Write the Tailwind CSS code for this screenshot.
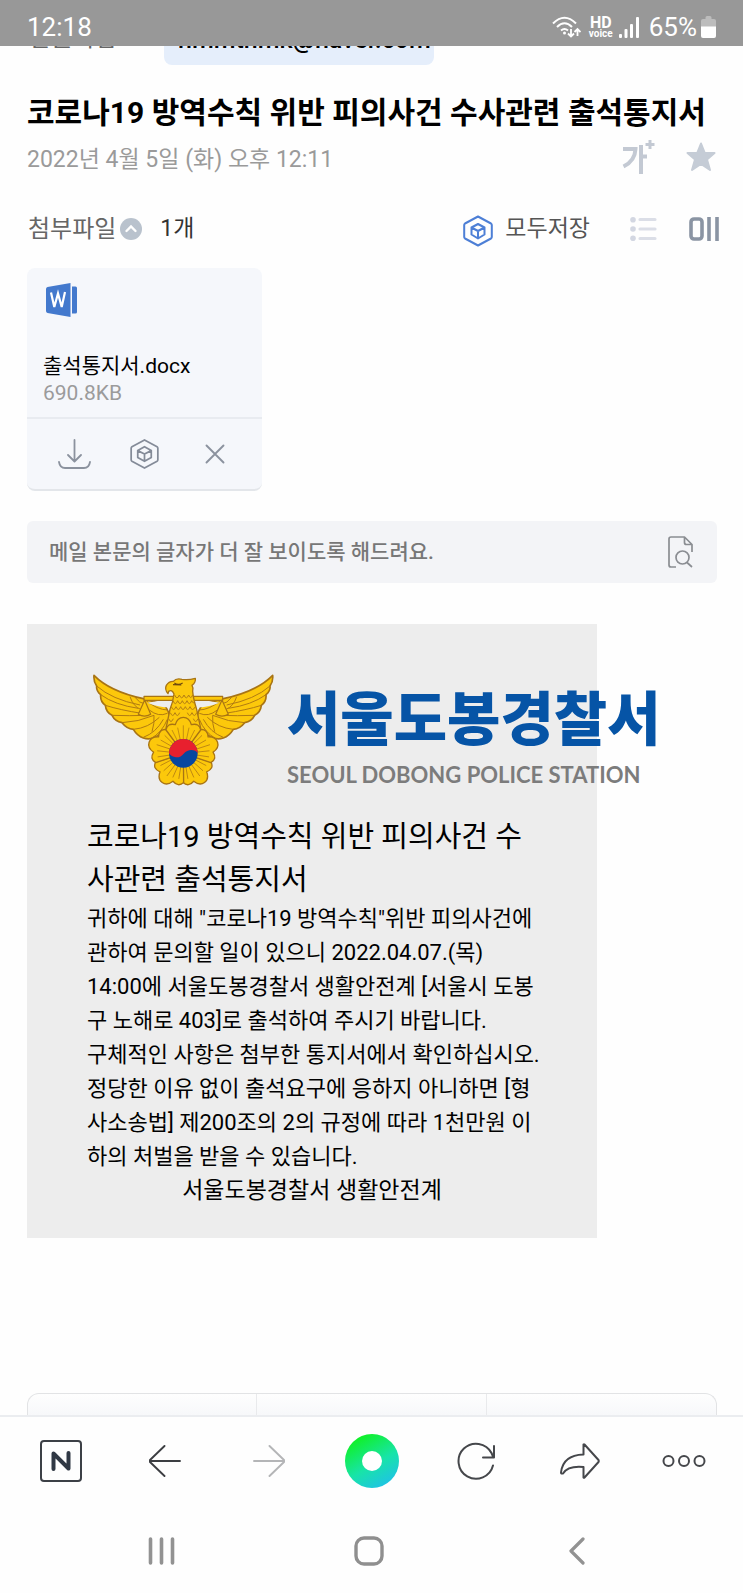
<!DOCTYPE html>
<html lang="ko">
<head>
<meta charset="utf-8">
<meta name="viewport" content="width=device-width, initial-scale=1">
<title>메일</title>
<script src="https://cdn.jsdelivr.net/npm/@tailwindcss/browser@4"></script>
</head>
<body class="flex min-h-screen flex-col bg-[#fefefe] font-[Roboto,'Noto_Sans_CJK_KR',sans-serif] text-black">

<!-- Status bar -->
<header class="flex h-[46px] items-end justify-between bg-[#989898] px-[27px] pb-1 text-white">
  <span class="text-[26px] leading-[30px]">12:18</span>
  <div class="flex items-center">
    <svg class="mr-2 h-[22px] w-[29px]" viewBox="0 0 29 22" fill="none" stroke="#fff" stroke-width="2" aria-hidden="true">
      <path d="M1 7.5Q12.500 -4 24 7.500M5 11Q12.500 3.500 20 11M9 14.500Q12.500 11.500 16 14.500"/>
      <circle cx="12.500" cy="17" r="1.500" fill="#fff" stroke="none"/>
      <path d="M19 13V20M16 17.500L19 20.500L22 17.500M25.500 20V13.500M22.500 16L25.500 13L28.500 16" stroke-width="1.800"/>
    </svg>
    <span class="mr-1.5 flex flex-col items-center font-bold">
      <span class="text-[16px] leading-[13px]">HD</span>
      <span class="text-[10px] leading-[9px]">voice</span>
    </span>
    <svg class="mr-2.5 h-[21px] w-5" viewBox="0 0 20 21" fill="#fff" aria-hidden="true">
      <rect x="0" y="17" width="3" height="4" rx="1"/><rect x="5.500" y="12" width="3" height="9" rx="1"/><rect x="11" y="7" width="3" height="14" rx="1"/><rect x="17" y="0" width="3" height="21" rx="1"/>
    </svg>
    <span class="text-[26px] leading-[30px]">65%</span>
    <svg class="ml-1 h-[22px] w-[15px]" viewBox="0 0 15 22" aria-hidden="true">
      <path d="M2 3H4.500V1.500Q4.500 0 6 0H9Q10.500 0 10.500 1.500V3H13Q15 3 15 5V11H0V5Q0 3 2 3Z" fill="#bcbcbc"/>
      <path d="M0 10.500H15V20Q15 22 13 22H2Q0 22 0 20Z" fill="#fff"/>
    </svg>
  </div>
</header>

<main class="grow">
  <!-- Recipient row, scrolled under the status bar -->
  <div class="flex h-[19px] items-end overflow-hidden px-[27px]">
    <span class="w-[137px] pb-3 pl-0.5 text-[24px] leading-[30px] text-[#666]">받는사람</span>
    <span class="w-[270px] rounded-lg bg-[#e5eefb] px-3.5 pb-2.5 text-center text-[25px] leading-[30px] font-medium">hmmthmk@naver.com</span>
  </div>

  <h1 class="mt-7 px-[27px] text-[30px] leading-[40px] font-bold">코로나19 방역수칙 위반 피의사건 수사관련 출석통지서</h1>

  <div class="mt-[7px] flex items-start justify-between px-[27px]">
    <time datetime="2022-04-05T12:11" class="text-[23px] leading-[40px] text-[#9a9a9a]">2022년 4월 5일 (화) 오후 12:11</time>
    <div class="flex items-center gap-[30px]">
      <button type="button" aria-label="글자 크게">
        <svg class="h-[34px] w-[34px]" viewBox="0 0 34 34" fill="none" stroke="#c3c9d3" stroke-width="4" aria-hidden="true">
          <path d="M1 9H13.500Q13 21 1.500 26.500M19 5V34M19 16.500H25"/><path d="M28 0V9M23.500 4.500H32.500" stroke-width="3"/>
        </svg>
      </button>
      <button type="button" aria-label="중요 표시">
        <svg class="h-[30px] w-[30px]" viewBox="0 0 30 30" fill="#c5ccd6" stroke="#c5ccd6" stroke-width="2" stroke-linejoin="round" aria-hidden="true">
          <path d="M15 1.500L18.800 11H28.500L21 17.500L24 28L15 22L6 28L9 17.500L1.500 11H11.200Z"/>
        </svg>
      </button>
    </div>
  </div>

  <div class="mt-[30px] flex items-center justify-between pr-6 pl-7">
    <div class="flex items-center text-[23px] leading-[38px]">
      <span class="text-[24px] text-[#666]">첨부파일</span>
      <button type="button" class="ml-1 flex h-[22px] w-[22px] items-center justify-center rounded-full bg-[#b9c2cd]" aria-label="첨부파일 접기">
        <svg class="h-[22px] w-[22px]" viewBox="0 0 22 22" fill="none" stroke="#fff" stroke-width="2.400" stroke-linecap="round" aria-hidden="true"><path d="M6.500 13L11 8.500L15.500 13"/></svg>
      </button>
      <span class="ml-[18px] text-[#333]">1개</span>
    </div>
    <div class="flex items-center">
      <button type="button" class="flex items-center gap-3 text-[23px] leading-[38px] text-[#555]">
        <svg class="mt-1 h-8 w-[30px]" viewBox="0 0 30 32" fill="none" stroke="#4d7fd6" stroke-width="2" stroke-linejoin="round" aria-hidden="true">
          <path d="M15 1.500L28 8.500Q28.800 9 28.800 10V22Q28.800 23 28 23.500L15 30.500L2 23.500Q1.200 23 1.200 22V10Q1.200 9 2 8.500Z"/>
          <path d="M15 9L21.500 12.500V19.500L15 23.500L8.500 19.500V12.500ZM8.500 12.500L15 16L21.500 12.500M15 16V23.500"/>
        </svg>
        모두저장
      </button>
      <button type="button" class="ml-10" aria-label="목록형 보기">
        <svg class="h-6 w-[27px]" viewBox="0 0 27 24" fill="none" stroke="#dbdee7" stroke-width="3.200" stroke-linecap="round" aria-hidden="true">
          <path d="M10 2.500H25M10 12H25M10 21.500H25"/><g fill="#d3d7e2" stroke="none"><circle cx="3" cy="2.800" r="2.800"/><circle cx="3" cy="12" r="2.800"/><circle cx="3" cy="21.200" r="2.800"/></g>
        </svg>
      </button>
      <button type="button" class="ml-8" aria-label="카드형 보기">
        <svg class="h-6 w-[30px]" viewBox="0 0 30 24" fill="none" stroke="#8a94a3" stroke-width="3.600" aria-hidden="true">
          <rect x="2" y="2" width="11" height="20" rx="3"/><path d="M20 0V24M28 0V24"/>
        </svg>
      </button>
    </div>
  </div>

  <!-- Attachment card -->
  <div class="mt-5 ml-[27px] w-[235px] rounded-lg border-b-2 border-[#e3e6ea] bg-[#f5f7fb]">
    <div class="px-4 pt-[15px] pb-[11px]">
      <svg class="ml-[3px] h-[34px] w-8" viewBox="0 0 32 34" aria-hidden="true">
        <path d="M1.500 4L24.500 0V34L1.500 30Q0 29.500 0 28V6Q0 4.500 1.500 4Z" fill="#4379cd"/>
        <path d="M26 3.500H29.500Q31 3.500 31 5V29Q31 30.500 29.500 30.500H26Z" fill="#4379cd"/>
        <path d="M5 9.500L8.300 24L12 10.500L15.700 24L19 9" fill="none" stroke="#fff" stroke-width="2.200"/>
      </svg>
      <a href="#" class="mt-[35px] block text-[21px] leading-[28px]">출석통지서.docx</a>
      <p class="text-[21px] leading-[26px] text-[#9b9b9b]">690.8KB</p>
    </div>
    <div class="grid h-[72px] grid-cols-3 items-center justify-items-center border-t-2 border-[#e8ebf0] px-3">
      <button type="button" aria-label="다운로드">
        <svg class="h-[30px] w-[33px]" viewBox="0 0 33 30" fill="none" stroke="#8b929e" stroke-width="1.800" stroke-linecap="round" stroke-linejoin="round" aria-hidden="true"><path d="M16.500 1V22M10 16L16.500 22.500L23 16M1 23Q2 29 7 29H26Q31 29 32 23"/></svg>
      </button>
      <button type="button" aria-label="클라우드에 저장">
        <svg class="h-8 w-[29px]" viewBox="0 0 30 32" fill="none" stroke="#848b98" stroke-width="1.800" stroke-linejoin="round" aria-hidden="true">
          <path d="M15 1.500L28 8.500Q28.800 9 28.800 10V22Q28.800 23 28 23.500L15 30.500L2 23.500Q1.200 23 1.200 22V10Q1.200 9 2 8.500Z"/>
          <path d="M15 8.500L22 12.500V19.500L15 23.500L8 19.500V12.500ZM8 12.500L15 16L22 12.500M15 16V23.500"/>
        </svg>
      </button>
      <button type="button" aria-label="삭제">
        <svg class="h-5 w-5" viewBox="0 0 20 20" fill="none" stroke="#8b929e" stroke-width="1.900" stroke-linecap="round" aria-hidden="true"><path d="M1.500 1.500L18.500 18.500M18.500 1.500L1.500 18.500"/></svg>
      </button>
    </div>
  </div>

  <button type="button" class="mx-[27px] mt-[30px] flex h-[62px] w-[calc(100%-53px)] items-center justify-between rounded-md bg-[#f3f4f7] pr-6 pl-[22px] text-left">
    <span class="text-[21px] leading-[30px] font-medium text-[#777]">메일 본문의 글자가 더 잘 보이도록 해드려요.</span>
    <svg class="h-8 w-[25px]" viewBox="0 0 25 32" fill="none" stroke="#8a8d92" stroke-width="1.700" stroke-linejoin="round" aria-hidden="true">
      <path d="M8 31H3Q1 31 1 29V3Q1 1 3 1H16.500L24 8.500V16M16.500 1V6.500Q16.500 8.500 18.500 8.500H24"/><circle cx="14.500" cy="21.500" r="6.500"/><path d="M19 26.500L24 31"/>
    </svg>
  </button>

  <!-- Mail body -->
  <article class="mt-[41px] ml-[27px] w-[570px] bg-[#ededed] px-[60px] pt-[50px] pb-[30px] whitespace-nowrap">
    <div class="flex items-start pl-1.5">
      <svg class="h-[112px] w-[181px] shrink-0" viewBox="39 42 543 336" stroke-linejoin="round" role="img" aria-label="경찰 상징">
        <defs>
          <g id="wing">
            <path d="M42 46C80 85 130 103 190 116L250 134Q272 150 270 200L238 224Q215 242 190 234Q172 228 160 208Q140 206 126 188Q105 184 96 166Q78 156 76 136Q60 124 62 104Q48 92 50 78Q40 64 42 46Z" fill="#fcc80b" stroke="#a87414" stroke-width="5"/>
            <path d="M50 78Q95 118 180 135M62 104Q105 135 175 145M76 136Q120 150 185 160M96 166Q145 168 205 166M126 188Q175 186 222 166M160 208Q205 204 238 172M190 232Q228 218 250 178M212 236Q246 218 262 178M196 120Q232 150 264 150M208 150Q235 172 262 160M150 110Q160 140 182 148M165 112Q178 130 196 132M222 166Q224 190 216 215" fill="none" stroke="#b17b12" stroke-width="3"/>
          </g>
          <g id="petal">
            <path d="M310 280L258 210Q262 188 286 194Q292 172 310 172Q328 172 334 194Q358 188 362 210Z" fill="#fcc80b" stroke="#a87414" stroke-width="4"/>
            <path d="M310 196V250M293 203L303 250M327 203L317 250M276 210L297 252M344 210L323 252" fill="none" stroke="#b98312" stroke-width="2.500"/>
          </g>
        </defs>
        <use href="#wing"/>
        <use href="#wing" transform="translate(620 0) scale(-1 1)"/>
        <path d="M202 128Q235 120 272 126L270 142Q235 142 202 128ZM418 128Q385 120 348 126L350 142Q385 142 418 128Z" fill="#ededed"/>
        <path d="M192 109H428V121H192Z" fill="#fcc80b" stroke="#a87414" stroke-width="3.500"/>
        <path d="M194 120L175 163Q193 174 212 163ZM426 120L407 163Q426 174 445 163Z" fill="#fcc80b" stroke="#a87414" stroke-width="3.500"/>
        <path d="M282 102Q276 87 266 94L264 101Q253 88 259 76Q267 63 280 64Q288 54 306 58Q325 61 346 55Q348 67 336 76Q341 84 338 94Q340 117 350 148L362 205H258L270 148Q279 126 282 102Z" fill="#fcc80b" stroke="#a87414" stroke-width="4"/>
        <path d="M283 69Q295 77 308 69M279 74L304 75" fill="none" stroke="#6f4a10" stroke-width="3.500"/>
        <path d="M284 105Q291 122 298 105Q305 122 312 105Q319 122 326 105Q332 120 338 105M279 122Q286 140 293 122Q300 140 307 122Q314 140 321 122Q328 140 335 122Q340 134 344 124M274 140Q281 157 288 140Q295 157 302 140Q309 157 316 140Q323 157 330 140Q337 157 346 140M271 158Q278 175 285 158Q292 175 299 158M322 158Q329 175 336 158Q343 175 350 158M266 176Q273 193 280 176M340 176Q347 193 354 176" fill="none" stroke="#b47e14" stroke-width="3"/>
        <use href="#petal" transform="rotate(144 310 280)"/>
        <use href="#petal" transform="rotate(216 310 280)"/>
        <use href="#petal" transform="rotate(72 310 280)"/>
        <use href="#petal" transform="rotate(288 310 280)"/>
        <use href="#petal"/>
        <circle cx="310" cy="280" r="43" fill="#08479f"/>
        <path d="M267 280A43 43 0 0 1 353 280Q347 270 334 270Q321 270 311 281Q302 293 288 292Q274 290 267 280Z" fill="#e8202e"/>
      </svg>
      <div class="pt-2.5 pl-[13px]">
        <p class="text-[58px] leading-[72px] font-black text-[#0654a6]">서울도봉경찰서</p>
        <p class="pt-1 font-[Lato,sans-serif] text-[22px] leading-[30px] font-bold text-[#7c7c7c]">SEOUL DOBONG POLICE STATION</p>
      </div>
    </div>
    <h2 class="mt-[26px] text-[29px] leading-[43px]">코로나19 방역수칙 위반 피의사건 수<br>사관련 출석통지서</h2>
    <div class="text-[22px] leading-[34px]">
      <p>귀하에 대해 "코로나19 방역수칙"위반 피의사건에<br>관하여 문의할 일이 있으니 2022.04.07.(목)<br>14:00에 서울도봉경찰서 생활안전계 [서울시 도봉<br>구 노해로 403]로 출석하여 주시기 바랍니다.</p>
      <p>구체적인 사항은 첨부한 통지서에서 확인하십시오.</p>
      <p>정당한 이유 없이 출석요구에 응하지 아니하면 [형<br>사소송법] 제200조의 2의 규정에 따라 1천만원 이<br>하의 처벌을 받을 수 있습니다.</p>
      <p class="text-center text-[23px]">서울도봉경찰서 생활안전계</p>
    </div>
  </article>

  <!-- Top edge of the action row, cut off by the toolbar -->
  <div class="mr-[26px] ml-[27px] mt-[155px] grid h-[22px] grid-cols-3 divide-x divide-[#e9eaec] rounded-t-xl border border-b-0 border-[#e2e3e5] bg-linear-to-b from-[#fefefe] to-[#f7f8fa]">
    <div></div><div></div><div></div>
  </div>
</main>

<!-- Browser toolbar -->
<nav class="grid h-[94px] grid-cols-7 items-center justify-items-center border-t-2 border-[#ebedf0] bg-[#fefefe] pr-[7px] pl-[9px] pb-1" aria-label="브라우저">
  <button type="button" aria-label="네이버 홈">
    <svg class="h-[42px] w-[42px]" viewBox="0 0 42 42" fill="none" stroke="#3c4046" aria-hidden="true"><rect x="1" y="1" width="40" height="40" rx="3" stroke-width="2"/><path d="M13.500 29V13.500L28.500 28.500V13" stroke="#303844" stroke-width="4" stroke-linejoin="round" stroke-linecap="round"/></svg>
  </button>
  <button type="button" aria-label="뒤로">
    <svg class="h-8 w-8" viewBox="0 0 32 32" fill="none" stroke="#3c3e42" stroke-width="1.900" stroke-linecap="round" stroke-linejoin="round" aria-hidden="true"><path d="M31 16H1M15.500 1L1 15Q0.500 16 1 17L15.500 31"/></svg>
  </button>
  <button type="button" aria-label="앞으로" disabled>
    <svg class="h-8 w-8" viewBox="0 0 32 32" fill="none" stroke="#b4b5b7" stroke-width="1.900" stroke-linecap="round" stroke-linejoin="round" aria-hidden="true"><path d="M1 16H31M16.500 1L31 15Q31.500 16 31 17L16.500 31"/></svg>
  </button>
  <button type="button" class="flex h-[54px] w-[54px] items-center justify-center rounded-full bg-linear-[150deg] from-[#10f02c] from-15% via-[#18e4a8] via-55% to-[#20bdf0] to-95%" aria-label="그린닷">
    <span class="h-5 w-5 rounded-full bg-white"></span>
  </button>
  <button type="button" aria-label="새로고침">
    <svg class="h-[38px] w-[38px]" viewBox="0 0 38 38" fill="none" stroke="#45474b" stroke-width="2" stroke-linecap="round" stroke-linejoin="round" aria-hidden="true"><path d="M36 23.500A17.500 17.500 0 1 1 34.500 11L36 14.500M37 4V15.500H26"/></svg>
  </button>
  <button type="button" aria-label="공유">
    <svg class="h-9 w-10" viewBox="0 0 40 36" fill="none" stroke="#45474b" stroke-width="2" stroke-linejoin="round" aria-hidden="true"><path d="M23.500 1.500Q24 1 24.500 1.500L38.500 17Q39 18 38.500 19L24.500 34.500Q24 35 23.500 34.500V24Q8 22.500 3 30.500Q1 31 1 29.500Q3 12 23.500 11.500Z"/></svg>
  </button>
  <button type="button" aria-label="더보기">
    <svg class="h-3.5 w-11" viewBox="0 0 44 14" fill="none" stroke="#45474b" stroke-width="2" aria-hidden="true"><circle cx="6.500" cy="7" r="5"/><circle cx="22" cy="7" r="5"/><circle cx="37.500" cy="7" r="5"/></svg>
  </button>
</nav>

<!-- System navigation -->
<nav class="grid h-[84px] grid-cols-3 items-center justify-items-center bg-[#fefefe] pr-[62px] pl-[58px]" aria-label="시스템">
  <button type="button" aria-label="최근 앱">
    <svg class="h-7 w-[27px]" viewBox="0 0 27 28" stroke="#929292" stroke-width="3.600" stroke-linecap="round" aria-hidden="true"><path d="M2.500 2V26M13.500 2V26M24.500 2V26"/></svg>
  </button>
  <button type="button" aria-label="홈">
    <svg class="h-[30px] w-[30px]" viewBox="0 0 30 30" fill="none" stroke="#8f8f8f" stroke-width="3.400" aria-hidden="true"><rect x="2" y="2" width="26" height="26" rx="8"/></svg>
  </button>
  <button type="button" aria-label="뒤로 가기">
    <svg class="h-7 w-4" viewBox="0 0 16 28" fill="none" stroke="#929292" stroke-width="3.200" stroke-linecap="round" stroke-linejoin="round" aria-hidden="true"><path d="M14 2L2 14L14 26"/></svg>
  </button>
</nav>
</body>
</html>
